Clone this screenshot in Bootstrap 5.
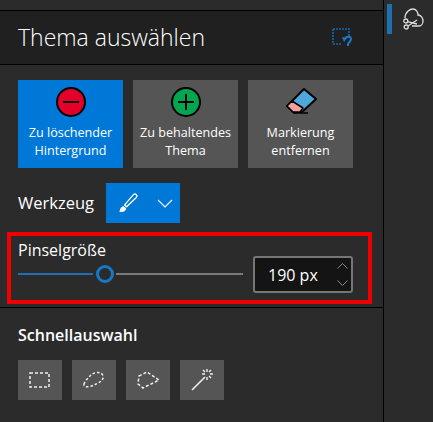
<!DOCTYPE html>
<html lang="de"><head><meta charset="utf-8"><title>Thema auswählen</title>
<link href="https://cdn.jsdelivr.net/npm/bootstrap@5.3.0/dist/css/bootstrap.min.css" rel="stylesheet">
<style>
html,body{height:422px;overflow:hidden}
body{background:#2b2b2b;color:#fff;font-family:"Open Sans","Noto Sans",sans-serif;font-size:13px}
.pane{width:384px;height:422px;border-right:1px solid #000}
.topgap{height:10px}
.head{height:55px;background:#202020;border-top:1px solid #000;border-bottom:1px solid #000;padding:0 31px 0 18px}
.head h1{font-family:"Open Sans",sans-serif;font-weight:300;font-size:23px;margin:0;color:#fff}
.tiles{padding:15px 18px 0;gap:10px}
.tile{width:105px;height:88px;background:#555;padding-top:6px;line-height:18px;font-size:12.6px}
.tile svg{display:block;margin-bottom:6px}
.on{background:#0078d7}
.tool{padding:15px 0 0 18px;height:55px;gap:12px;font-size:16.5px}
.toolbtn{width:74px;height:40px;background:#0078d7;padding:0 7px 0 11px}
.redbox{margin:9px 11px 0 7px;height:72px;border:4px solid #ee0000;padding:3px 0 0 7px}
.lbl{font-size:16px;line-height:22px}
.track{width:225px;height:18px;margin-top:4px}
.seg{height:2px}
.l{width:75px;background:#1f6fb5}
.r{flex:1;background:#7a7a7a;margin-left:2px}
.thumb{width:18px;height:18px;border:3px solid #1678c8;border-radius:50%;background:#2b2b2b;margin-left:3px}
.num{width:100px;height:37px;background:#141414;border:2px solid #767676;border-radius:3px;margin-left:10px;margin-top:-5px;padding-left:13px;font-size:16px}
.spin{margin-left:auto;margin-right:3px;gap:11px}
.rule{height:1px;background:#000;margin-top:3px}
.qs{padding:17px 0 0 18px}
.qs h2{font-size:16px;font-weight:600;margin:0 0 15px;line-height:20px}
.qrow{gap:10px}
.qb{width:44px;height:40px;background:#555}
.rail{width:49px;height:422px}
.mark{width:2px;height:30px;background:#1f6fb5;margin:4px 0 0 3px}
.rico{margin:8px 0 0 11px}
</style></head>
<body class="d-flex">
<div class="pane flex-shrink-0">
  <div class="topgap"></div>
  <div class="head d-flex align-items-center justify-content-between">
    <h1>Thema auswählen</h1>
    <svg width="20" height="19" viewBox="0 0 20 19" fill="none"><path d="M1 1h16v8M1 1v15h9" stroke="#1466b0" stroke-width="1.6" stroke-dasharray="2 1"/><path d="M13 11c1-3 6-3 6 0 0 2-2 3-3 5v2" stroke="#1678c8" stroke-width="2"/><path d="M10 9l5 1-3 4z" fill="#1678c8"/></svg>
  </div>
  <div class="tiles d-flex">
    <div class="tile on text-center d-flex flex-column align-items-center">
      <svg width="32" height="32" viewBox="0 0 32 32"><circle cx="16" cy="16" r="14" fill="#e3002b" stroke="#000" stroke-width="2"/><path d="M8 16h16" stroke="#000" stroke-width="2"/></svg>
      Zu löschender<br>Hintergrund</div>
    <div class="tile text-center d-flex flex-column align-items-center">
      <svg width="32" height="32" viewBox="0 0 32 32"><circle cx="16" cy="16" r="14" fill="#00a650" stroke="#000" stroke-width="2"/><path d="M8 16h16M16 8v16" stroke="#000" stroke-width="2"/></svg>
      Zu behaltendes<br>Thema</div>
    <div class="tile text-center d-flex flex-column align-items-center">
      <svg width="32" height="32" viewBox="0 0 32 32"><path d="M19 3l12 10-14 13H8l-6-6z" fill="#4fa8dc" stroke="#000" stroke-width="2" stroke-linejoin="round"/><path d="M7 15l-5 5 6 6h7l3-4z" fill="#f4a0a0" stroke="#000" stroke-width="1.500" stroke-linejoin="round"/><path d="M8 27h15" stroke="#000" stroke-width="1.500"/></svg>
      Markierung<br>entfernen</div>
  </div>
  <div class="tool d-flex align-items-center">
    <span>Werkzeug</span>
    <div class="toolbtn d-flex align-items-center justify-content-between">
      <svg width="21" height="22" viewBox="0 0 22 22" fill="none" stroke="#fff" stroke-width="1.400" stroke-linejoin="round"><path d="M20 2c-1-1-2-.5-3 .5L8 13l2 2L20 5.500c1-1 1-2.500 0-3.500z"/><path d="M7 15c-1.500 0-2.500.5-3 2l-1 3c2.500 0 5-.5 5.500-1.500.5-.5.5-1.500.5-2z" fill="#fff" stroke-width="1"/></svg>
      <svg width="16" height="9" viewBox="0 0 16 9" fill="none" stroke="#fff" stroke-width="1.200"><path d="M1 1l7 7 7-7"/></svg>
    </div>
  </div>
  <div class="redbox">
    <div class="lbl">Pinselgröße</div>
    <div class="d-flex">
      <div class="track d-flex align-items-center">
        <div class="seg l"></div><div class="thumb flex-shrink-0"></div><div class="seg r"></div>
      </div>
      <div class="num d-flex align-items-center">190 px
        <div class="spin d-flex flex-column">
          <svg width="11" height="6" viewBox="0 0 11 6" fill="none" stroke="#8a8a8a"><path d="M.5 5.500l5-5 5 5"/></svg>
          <svg width="11" height="6" viewBox="0 0 11 6" fill="none" stroke="#8a8a8a"><path d="M.5.500l5 5 5-5"/></svg>
        </div>
      </div>
    </div>
  </div>
  <div class="rule"></div>
  <div class="qs">
    <h2>Schnellauswahl</h2>
    <div class="qrow d-flex">
      <div class="qb d-flex align-items-center justify-content-center"><svg width="24" height="20" viewBox="0 0 24 20" fill="none" stroke="#eee" stroke-width="1.500" stroke-dasharray="3 2"><rect x="2" y="3" width="19" height="14"/></svg></div>
      <div class="qb d-flex align-items-center justify-content-center"><svg width="24" height="20" viewBox="0 0 24 20" fill="none" stroke="#eee" stroke-width="1.500" stroke-dasharray="2.500 2"><path d="M2 14c1-3 4-6 7-9 3-3 11-4 12 1 1 5-5 7-9 9-4 2-11 3-10-1z"/></svg></div>
      <div class="qb d-flex align-items-center justify-content-center"><svg width="24" height="20" viewBox="0 0 24 20" fill="none" stroke="#eee" stroke-width="1.500" stroke-dasharray="3 2"><path d="M3 6l8-4 12 8-16 8-5-4z"/></svg></div>
      <div class="qb d-flex align-items-center justify-content-center"><svg width="24" height="24" viewBox="0 0 24 24" fill="none" stroke="#eee" stroke-width="1.400"><path d="M2 22L15 9" stroke-width="1.600"/><path d="M17 1v3M17 9v3M12 6h3M20 6h3M13 2l2 2M21 2l-2 2M21 10l-2-2"/></svg></div>
    </div>
  </div>
</div>
<div class="rail d-flex align-items-start">
  <div class="mark"></div>
  <svg class="rico" width="21" height="22" viewBox="0 0 21 22" fill="none" stroke="#ddd" stroke-width="1.300"><path d="M2 10C2 4 7 1 10 1c3 0 5 3 5 6 3 0 5 3 5 6s-2 5-4 5H9"/><circle cx="2.800" cy="13" r="2"/><circle cx="3.200" cy="19" r="2"/><path d="M4.500 13.600L14 16M5 18l9-6"/></svg>
</div>
<script src="https://cdn.jsdelivr.net/npm/bootstrap@5.3.0/dist/js/bootstrap.bundle.min.js"></script>
</body></html>
